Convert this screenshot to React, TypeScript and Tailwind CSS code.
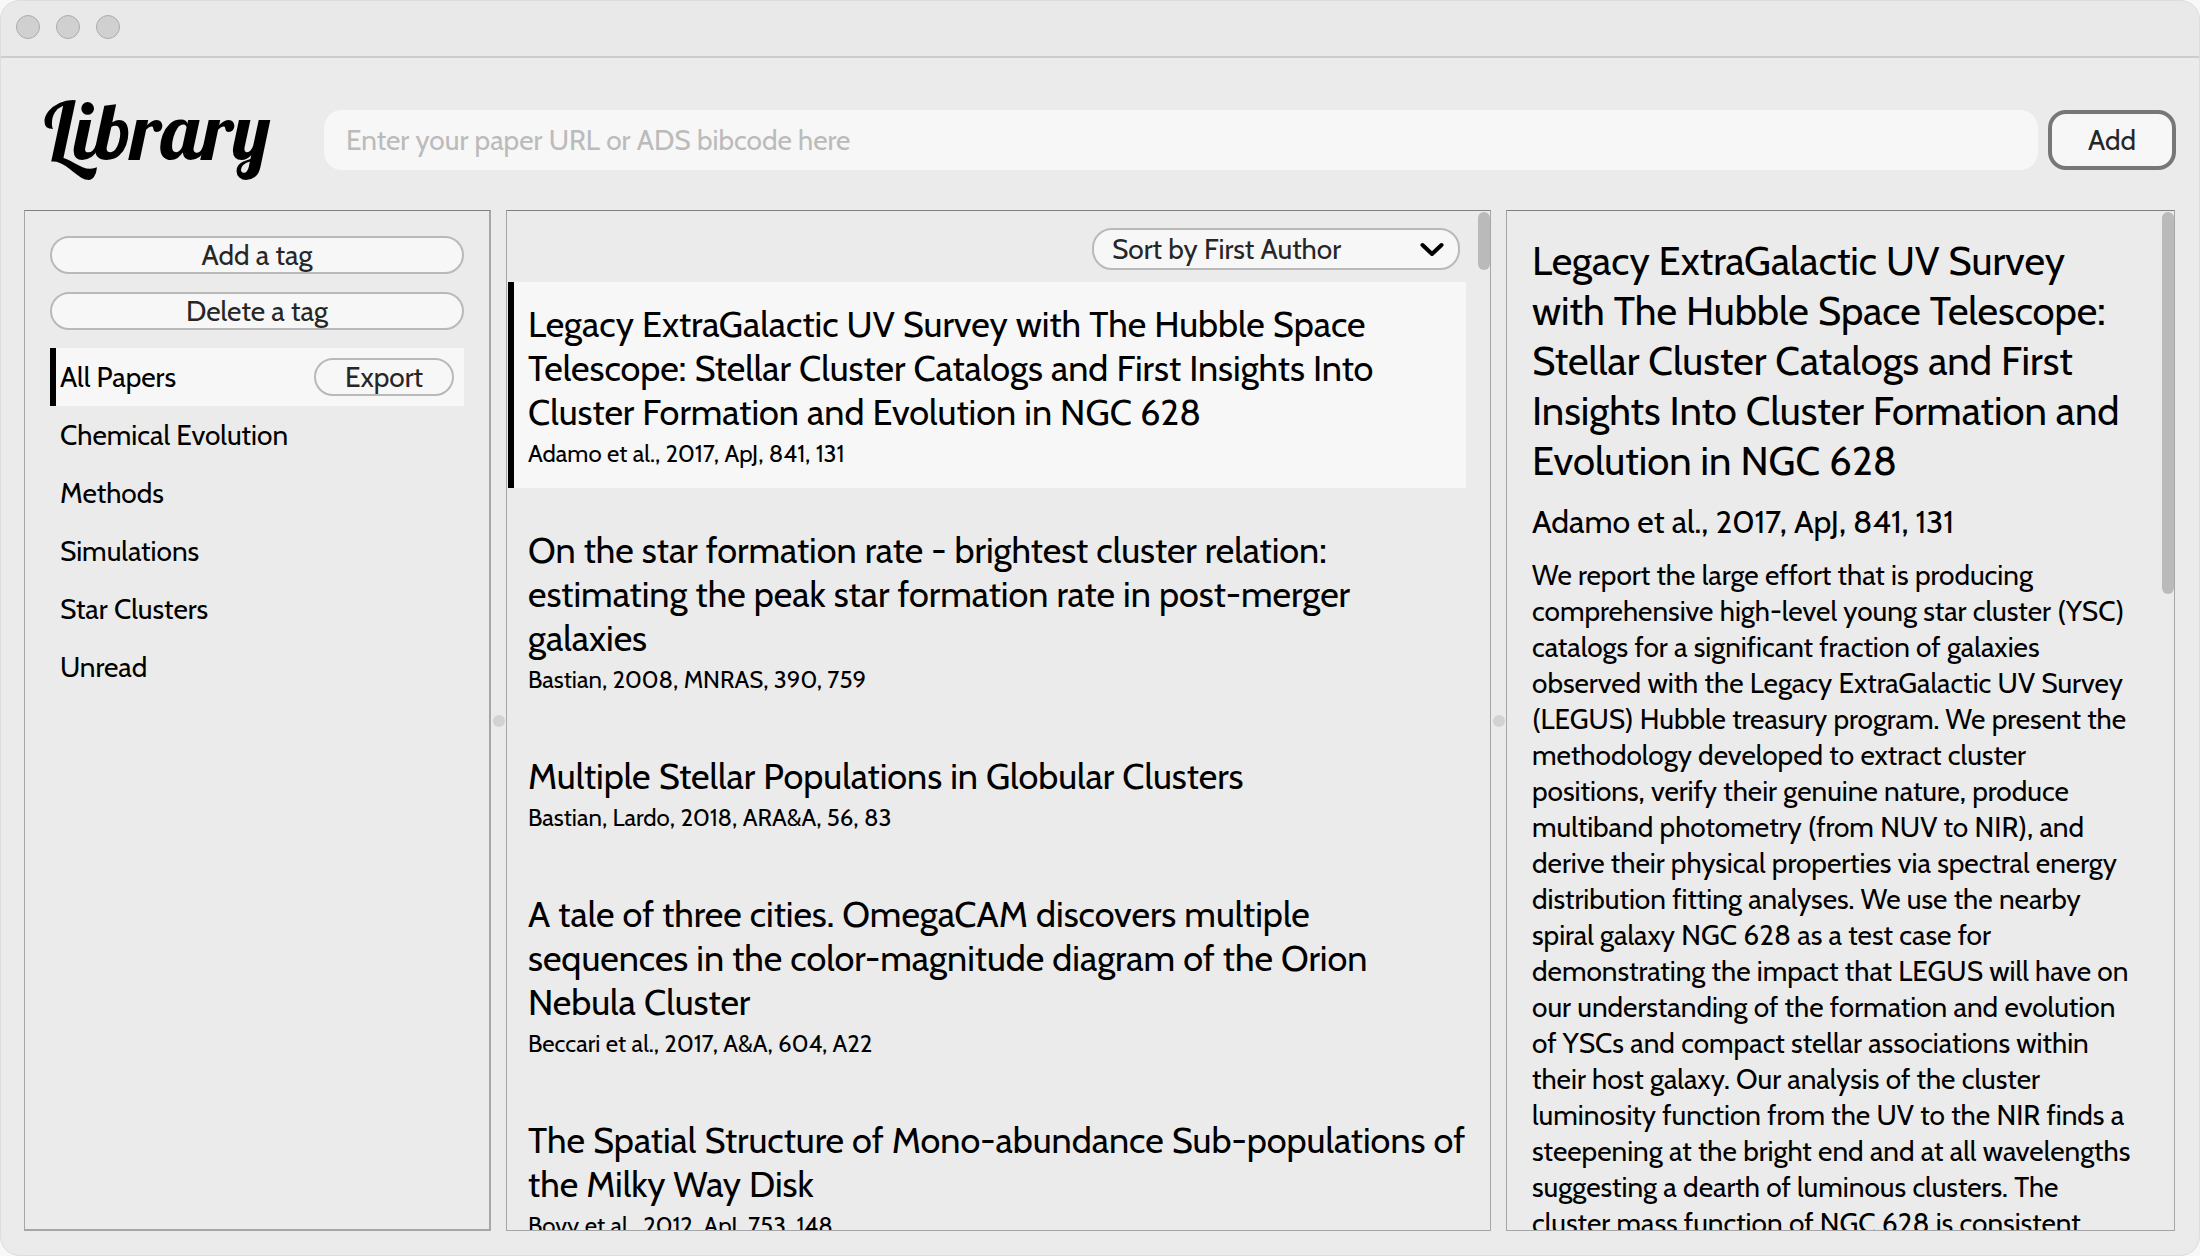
import React from 'react';

type Paper = { title: string; cite: string };

const papers: Paper[] = [
  {
    title:
      'Legacy ExtraGalactic UV Survey with The Hubble Space Telescope: Stellar Cluster Catalogs and First Insights Into Cluster Formation and Evolution in NGC 628',
    cite: 'Adamo et al., 2017, ApJ, 841, 131',
  },
  {
    title:
      'On the star formation rate - brightest cluster relation: estimating the peak star formation rate in post-merger galaxies',
    cite: 'Bastian, 2008, MNRAS, 390, 759',
  },
  { title: 'Multiple Stellar Populations in Globular Clusters', cite: 'Bastian, Lardo, 2018, ARA&A, 56, 83' },
  {
    title:
      'A tale of three cities. OmegaCAM discovers multiple sequences in the color-magnitude diagram of the Orion Nebula Cluster',
    cite: 'Beccari et al., 2017, A&A, 604, A22',
  },
  {
    title: 'The Spatial Structure of Mono-abundance Sub-populations of the Milky Way Disk',
    cite: 'Bovy et al., 2012, ApJ, 753, 148',
  },
];

const tags = ['All Papers', 'Chemical Evolution', 'Methods', 'Simulations', 'Star Clusters', 'Unread'];

const abstractText =
  'We report the large effort that is producing comprehensive high-level young star cluster (YSC) catalogs for a significant fraction of galaxies observed with the Legacy ExtraGalactic UV Survey (LEGUS) Hubble treasury program. We present the methodology developed to extract cluster positions, verify their genuine nature, produce multiband photometry (from NUV to NIR), and derive their physical properties via spectral energy distribution fitting analyses. We use the nearby spiral galaxy NGC 628 as a test case for demonstrating the impact that LEGUS will have on our understanding of the formation and evolution of YSCs and compact stellar associations within their host galaxy. Our analysis of the cluster luminosity function from the UV to the NIR finds a steepening at the bright end and at all wavelengths suggesting a dearth of luminous clusters. The cluster mass function of NGC 628 is consistent';

function TitleBar() {
  return (
    <div className="flex h-[58px] shrink-0 items-center gap-4 border-t border-b-2 border-t-[#f6f6f6] border-b-[#cccccc] bg-[#e9e9e9] px-4 pb-1">
      {['close', 'minimise', 'zoom'].map((name) => (
        <button
          key={name}
          type="button"
          aria-label={name}
          className="size-6 rounded-full border border-[#acacac] bg-[#d0d0d0]"
        />
      ))}
    </div>
  );
}

function Header() {
  return (
    <header className="flex h-[152px] shrink-0 items-start pt-[22px] pr-6 pl-11">
      <h1 className="w-[280px] shrink-0 font-['Lobster','Liberation_Serif',serif] text-[80px] leading-[100px]">
        Library
      </h1>
      <form className="flex grow gap-2.5 pt-[30px]" onSubmit={(e) => e.preventDefault()}>
        <input
          type="text"
          aria-label="Paper URL or ADS bibcode"
          placeholder="Enter your paper URL or ADS bibcode here"
          className="h-[60px] min-w-0 grow rounded-[18px] bg-[#f7f7f7] px-[22px] placeholder:text-[#bbbbbb]"
        />
        <button
          type="submit"
          className="h-[60px] w-32 rounded-[18px] border-4 border-[#777777] bg-[#f7f7f7] text-[#262626]"
        >
          Add
        </button>
      </form>
    </header>
  );
}

const pill = 'h-[38px] rounded-[19px] border-2 border-[#b9b9b9] bg-[#f7f7f7] leading-[34px] text-[#262626]';

function TagPanel() {
  return (
    <nav className="flex flex-col border border-r-2 border-b-2 border-[#a6a6a6] border-t-[#808080] pt-[25px] pr-[25px] pl-[25px]">
      <button type="button" className={pill}>
        Add a tag
      </button>
      <button type="button" className={`mt-[18px] ${pill}`}>
        Delete a tag
      </button>
      <ul className="mt-[18px]">
        {tags.map((tag, i) => (
          <li
            key={tag}
            className={`flex h-[58px] items-center justify-between border-l-[6px] pr-2.5 pl-1 ${
              i === 0 ? 'border-black bg-[#f7f7f7]' : 'border-transparent'
            }`}
          >
            <a href="#">{tag}</a>
            {i === 0 && (
              <button type="button" className={`w-[140px] ${pill}`}>
                Export
              </button>
            )}
          </li>
        ))}
      </ul>
    </nav>
  );
}

function Splitter() {
  return (
    <div className="flex items-center justify-center">
      <div className="size-3 shrink-0 rounded-full bg-[#d2d2d2]" />
    </div>
  );
}

function PaperPanel() {
  return (
    <main className="relative min-h-0 overflow-hidden border border-[#a6a6a6] border-t-[#808080] pr-6 pl-px">
      <div className="flex justify-end pt-[17px] pr-1.5 pb-3">
        <div className="relative w-[368px]">
          <select
            aria-label="Sort papers"
            className="h-[42px] w-full appearance-none rounded-[20px] border-2 border-[#b9b9b9] bg-[#f7f7f7] pl-[18px] text-[#262626]"
          >
            <option>Sort by First Author</option>
          </select>
          <svg viewBox="0 0 24 16" className="pointer-events-none absolute top-3.5 right-4 h-4 w-6" aria-hidden="true">
            <path d="M2.5 3 L12 12 L21.5 3" fill="none" stroke="#000" strokeWidth="4" strokeLinecap="round" strokeLinejoin="round" />
          </svg>
        </div>
      </div>
      <ul className="flex flex-col gap-5">
        {papers.map((paper, i) => (
          <li
            key={paper.title}
            className={`border-l-[6px] pt-5 pb-5 pl-3.5 ${i === 0 ? 'border-black bg-[#f7f7f7]' : 'border-transparent'}`}
          >
            <h2 className="text-4xl leading-11">{paper.title}</h2>
            <p className="pt-1.5 text-2xl leading-7">{paper.cite}</p>
          </li>
        ))}
      </ul>
      <div className="absolute top-px right-0 h-[58px] w-3 rounded-full bg-[#bababa]" />
    </main>
  );
}

function DetailPanel() {
  return (
    <aside className="relative min-h-0 overflow-hidden border border-[#a6a6a6] border-t-[#808080] pt-[25px] pr-9 pl-[25px]">
      <h2 className="text-[40px] leading-[50px]">{papers[0].title}</h2>
      <p className="pt-4 text-[32px] leading-10">{papers[0].cite}</p>
      <p className="pt-[15px] leading-9">{abstractText}</p>
      <div className="absolute top-px right-0 h-[382px] w-3 rounded-full bg-[#bababa]" />
    </aside>
  );
}

export default function App() {
  return (
    <div className="h-screen bg-[#f8f8f8]">
      <div className="flex h-full flex-col overflow-hidden rounded-[20px] bg-[#ebebeb] font-['Cabin','Lato',sans-serif] text-[28px] leading-9 text-black outline outline-1 -outline-offset-1 outline-[#dddddd]">
        <TitleBar />
        <Header />
        <div className="grid min-h-0 grow grid-cols-[467fr_15px_985fr_15px_669fr] grid-rows-[minmax(0,1fr)] pr-[25px] pb-[25px] pl-6">
          <TagPanel />
          <Splitter />
          <PaperPanel />
          <Splitter />
          <DetailPanel />
        </div>
      </div>
    </div>
  );
}
